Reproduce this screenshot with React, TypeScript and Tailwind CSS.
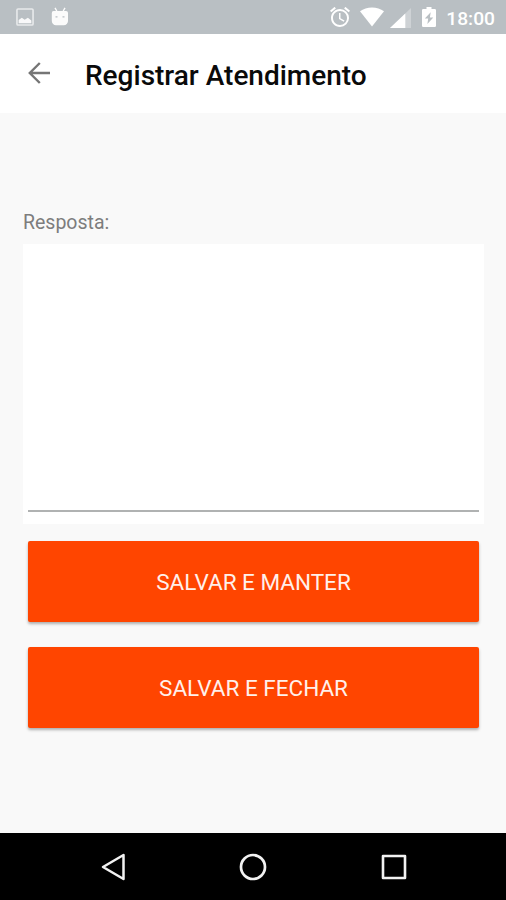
import type { ReactNode } from 'react';

const PictureIcon = () => (
  <svg width="18" height="18" viewBox="0 0 17 17" className="ml-[16px] opacity-90">
    <rect x="0.9" y="0.9" width="15.2" height="15.2" rx="1" fill="none" stroke="#fff" strokeWidth="1.5" strokeOpacity="0.75" />
    <path d="M2.500 14.500v-3.200l3-2.100 2.700 1.800 3-1.800 3.300 2.500v2.800z" fill="#fff" />
  </svg>
);

const RobotIcon = () => (
  <svg width="18" height="19" viewBox="0 0 18 19" className="-mt-0.5 ml-[17px] opacity-95">
    <path d="M4 0.8 5.800 4M14 0.8 12.200 4" stroke="#fff" strokeWidth="1.4" />
    <path
      fill="#fff"
      fillRule="evenodd"
      d="M2.500 4h12.500a2 2 0 0 1 2 2v8a4.200 4.200 0 0 1-4.200 4.200H5A4.200 4.200 0 0 1 0.800 14V6a2 2 0 0 1 1.700-2zM4.500 9.300v1.200h2V9.300zM11.500 9.300v1.200h2V9.300z"
    />
  </svg>
);

const AlarmIcon = () => (
  <svg width="20" height="20" viewBox="2 2 20 20" fill="#fff">
    <path d="M22 5.720l-4.600-3.860-1.290 1.530 4.600 3.860L22 5.720zM7.880 3.390L6.600 1.860 2 5.710l1.290 1.530 4.590-3.850zM12.500 8H11v6l4.750 2.850.75-1.230-4-2.370V8zM12 4c-4.970 0-9 4.030-9 9s4.020 9 9 9a9 9 0 0 0 0-18zm0 16c-3.870 0-7-3.130-7-7s3.130-7 7-7 7 3.130 7 7-3.130 7-7 7z" />
  </svg>
);

const WifiIcon = () => (
  <svg width="24" height="20" viewBox="0 0 24 20" fill="#fff" className="ml-2.5">
    <path d="M12 19.500 0 4.200C3.300 1.700 7.500.4 12 .4s8.700 1.300 12 3.800z" />
  </svg>
);

const SignalIcon = () => (
  <svg width="21" height="20" viewBox="0 0 21 20" fill="#fff" className="mt-0.5 ml-1.5">
    <path d="M21 0v20H0z" opacity="0.3" />
    <path d="M15.300 5.400V20H0z" />
  </svg>
);

const BatteryIcon = () => (
  <svg width="14" height="20" viewBox="0 0 14 20" fill="#fff" className="ml-[11px]">
    <path
      fillRule="evenodd"
      d="M4.500 0h5v2h3.200q1.300 0 1.300 1.300v15.400q0 1.300-1.300 1.300H1.300Q0 20 0 18.700V3.300Q0 2 1.300 2h3.200zM8.700 5.200 2.800 11.500h3.400l-.8 5.600 5.900-6.700H7.900z"
    />
  </svg>
);

const StatusBar = () => (
  <div className="flex h-[34px] shrink-0 items-center bg-[#b9bfc3]">
    <PictureIcon />
    <RobotIcon />
    <div className="ml-auto flex items-center pr-[11px]">
      <AlarmIcon />
      <WifiIcon />
      <SignalIcon />
      <BatteryIcon />
      <span className="ml-2.5 pt-1 text-[19.2px] leading-6 font-medium text-white">18:00</span>
    </div>
  </div>
);

const SaveButton = ({ children }: { children: ReactNode }) => (
  <button className="flex h-[81px] w-full items-center justify-center rounded-[2px] bg-[#ff4500] pt-0.5 text-[22.5px] text-[#fff0eb] shadow-[0_2px_3px_rgba(0,0,0,0.3)]">
    {children}
  </button>
);

const App = () => {
  return (
    <div className="flex h-[900px] w-[506px] flex-col overflow-hidden bg-[#f9f9f9] font-['Roboto',sans-serif]">
      <StatusBar />

      <header className="flex h-[79px] shrink-0 items-center bg-white">
        <svg width="22" height="22" viewBox="0 0 22 22" className="-mt-0.5 ml-7" fill="none" stroke="#757575" strokeWidth="2.400">
          <path d="M22 11H2M11.800 1 1.800 11l10 10" />
        </svg>
        <h1 className="ml-[35px] pt-1 text-[28px] font-medium whitespace-nowrap text-[#0a0a0a]">Registrar Atendimento</h1>
      </header>

      <main className="flex-1 pt-[95px] pr-[22px] pl-[23px]">
        <label htmlFor="resposta" className="block h-9 text-[19.5px] leading-[30px] text-[#7d7d7d]">
          Resposta:
        </label>
        {/* Text field with underline inset from its white background */}
        <div className="h-[280px] bg-white px-[5px] pb-3">
          <textarea
            id="resposta"
            className="block h-full w-full resize-none border-b-2 border-[#b0b2b2] bg-transparent outline-none"
          />
        </div>
        <div className="flex flex-col gap-[25px] pt-[17px] pr-[5px] pl-[5px]">
          <SaveButton>SALVAR E MANTER</SaveButton>
          <SaveButton>SALVAR E FECHAR</SaveButton>
        </div>
      </main>

      {/* System navigation bar */}
      <nav className="flex h-[67px] shrink-0 items-center justify-between bg-black pr-[99px] pl-[101px]">
        <svg width="24" height="28" viewBox="0 0 24 28" fill="none" stroke="#f2f2f2" strokeWidth="2.500" strokeLinejoin="round">
          <path d="M22.500 2v24L2 14z" />
        </svg>
        <svg width="28" height="28" viewBox="0 0 28 28" fill="none" stroke="#f2f2f2" strokeWidth="2.700">
          <circle cx="14" cy="14" r="12" />
        </svg>
        <svg width="26" height="26" viewBox="0 0 26 26" fill="none" stroke="#f2f2f2" strokeWidth="2.600" strokeLinejoin="round">
          <rect x="2" y="2" width="22" height="22" />
        </svg>
      </nav>
    </div>
  );
};

export default App;
